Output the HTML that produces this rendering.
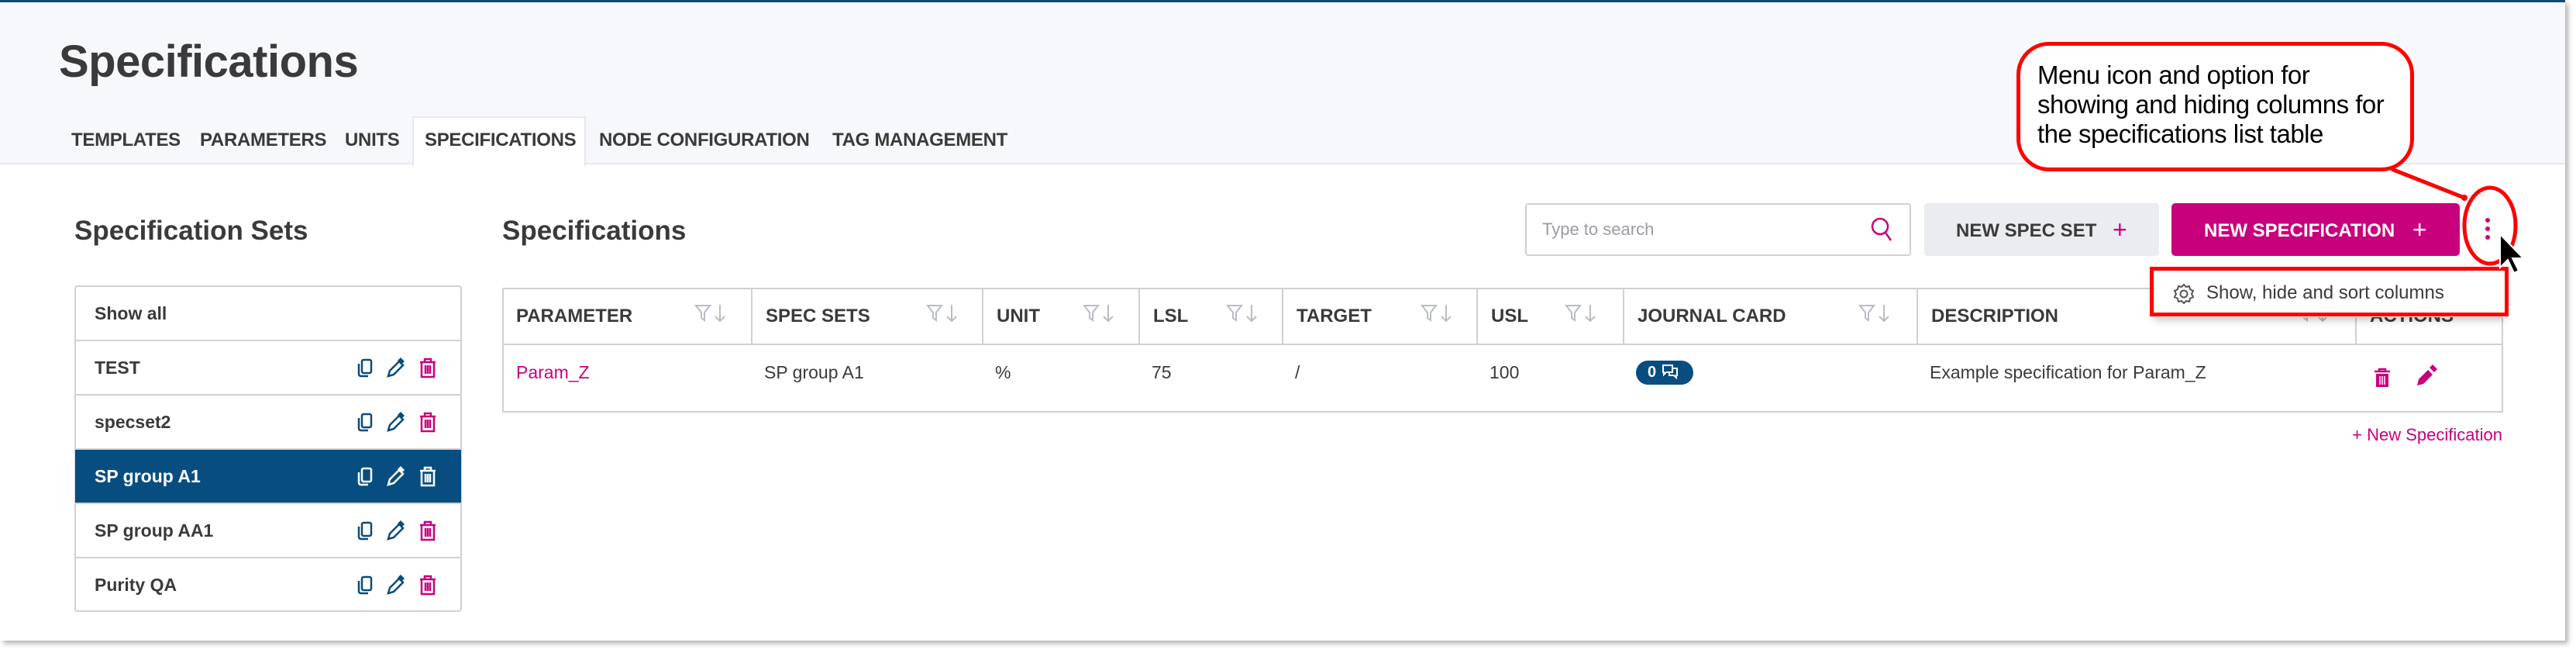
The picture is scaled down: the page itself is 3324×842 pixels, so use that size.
<!DOCTYPE html>
<html><head><meta charset="utf-8"><style>
*{box-sizing:border-box;margin:0;padding:0}
body{width:3324px;height:842px;position:relative;overflow:hidden;background:#fff;font-family:"Liberation Sans",Arial,sans-serif;color:#3a3a3a}
.a{position:absolute}
.page{left:0;top:0;width:3310px;height:826px;background:#fff;box-shadow:4px 4px 6px #b8b8b8}
.hdr{left:0;top:3px;width:3310px;height:209px;background:#f7f8fb;border-bottom:2px solid #e6e8ee}
.tab{top:167px;font-size:24px;font-weight:bold;color:#3a3a3a;letter-spacing:-0.3px}
.h2{font-size:35px;font-weight:bold;color:#3a3a3a}
.row{left:97px;width:498px;height:70px;border-bottom:2px solid #d0d0d6;font-size:23px;font-weight:bold;color:#3a3a3a;padding:0 0 0 25px;line-height:68px}
.th{top:373px;height:70px;border-left:2px solid #cfd0d6;font-size:24px;font-weight:bold;color:#3a3a3a;line-height:70px;padding-left:17px}
.td{top:445px;font-size:23px;color:#3a3a3a;line-height:70px}
</style></head><body>
<div class="a page"></div>
<div class="a" style="left:0;top:0;width:3310px;height:3px;background:#0a4b7c"></div>
<div class="a hdr"></div>
<div class="a" style="left:76px;top:46px;font-size:58px;font-weight:bold;color:#3a3a3a;letter-spacing:-0.5px">Specifications</div>
<div class="a" style="left:532px;top:150px;width:224px;height:64px;background:#fff;border:2px solid #e6e8ee;border-bottom:none"></div>
<div class="a tab" style="left:92px">TEMPLATES</div>
<div class="a tab" style="left:258px">PARAMETERS</div>
<div class="a tab" style="left:445px">UNITS</div>
<div class="a tab" style="left:548px">SPECIFICATIONS</div>
<div class="a tab" style="left:773px">NODE CONFIGURATION</div>
<div class="a tab" style="left:1074px">TAG MANAGEMENT</div>

<div class="a h2" style="left:96px;top:278px">Specification Sets</div>
<div class="a h2" style="left:648px;top:278px">Specifications</div>

<div class="a" style="left:96px;top:368px;width:500px;height:421px;border:2px solid #d0d0d6;border-radius:4px"></div>
<div class="a row" style="top:370px">Show all</div>
<div class="a row" style="top:440px">TEST</div>
<div class="a row" style="top:510px">specset2</div>
<div class="a row" style="top:580px;background:#074d80;color:#fff">SP group A1</div>
<div class="a row" style="top:650px">SP group AA1</div>
<div class="a row" style="top:720px;border-bottom:none">Purity QA</div>

<svg class="a" style="left:0;top:0" width="3324" height="842">
<defs>
<g id="cp"><rect x="5" y="-10" width="12" height="17" rx="2" fill="none" stroke="currentColor" stroke-width="2.5"/><path d="M1 -5 v13 q0 3 3 3 h9" fill="none" stroke="currentColor" stroke-width="2.5"/></g>
<g id="pn"><path d="M-8 11 l2-7 12-12 5 5 -12 12z" fill="none" stroke="currentColor" stroke-width="2.5"/><path d="M4 -9 l4-4 5 5 -4 4z" fill="currentColor"/></g>
<g id="tr"><path d="M-10 -7 h20 M-4 -7 v-4 h8 v4 M-8 -7 v19 h16 v-19 M-3 -3 v11 M0 -3 v11 M3 -3 v11" fill="none" stroke="currentColor" stroke-width="2.5"/></g>
<g id="ff"><path d="M-9 -10 h18 l-7 9 v10 l-4 -3 v-7z" fill="none" stroke="#b9bcc4" stroke-width="2"/><path d="M22 -11 v21 M16 4 l6 6 6-6" fill="none" stroke="#b9bcc4" stroke-width="2"/></g>
</defs>
<g style="color:#0a4b7c">
<use href="#cp" x="462" y="474"/><use href="#pn" x="509" y="474"/>
<use href="#cp" x="462" y="544"/><use href="#pn" x="509" y="544"/>
<use href="#cp" x="462" y="684"/><use href="#pn" x="509" y="684"/>
<use href="#cp" x="462" y="754"/><use href="#pn" x="509" y="754"/>
</g>
<g style="color:#fff"><use href="#cp" x="462" y="614"/><use href="#pn" x="509" y="614"/><use href="#tr" x="552" y="614"/></g>
<g style="color:#c8007c"><use href="#tr" x="552" y="474"/><use href="#tr" x="552" y="544"/><use href="#tr" x="552" y="684"/><use href="#tr" x="552" y="754"/></g>
</svg>

<!-- table -->
<div class="a" style="left:648px;top:371px;width:2582px;height:161px;border:2px solid #cfd0d6"></div>
<div class="a" style="left:650px;top:443px;width:2578px;height:2px;background:#cfd0d6"></div>
<div class="a th" style="left:649px;border-left:none">PARAMETER</div>
<div class="a th" style="left:969px">SPEC SETS</div>
<div class="a th" style="left:1267px">UNIT</div>
<div class="a th" style="left:1469px">LSL</div>
<div class="a th" style="left:1654px">TARGET</div>
<div class="a th" style="left:1905px">USL</div>
<div class="a th" style="left:2094px">JOURNAL CARD</div>
<div class="a th" style="left:2473px">DESCRIPTION</div>
<div class="a th" style="left:3039px">ACTIONS</div>
<svg class="a" style="left:0;top:0" width="3324" height="842">
<use href="#ff" x="907" y="404"/><use href="#ff" x="1206" y="404"/><use href="#ff" x="1408" y="404"/><use href="#ff" x="1593" y="404"/><use href="#ff" x="1844" y="404"/><use href="#ff" x="2030" y="404"/><use href="#ff" x="2409" y="404"/><use href="#ff" x="2975" y="404"/>
</svg>
<div class="a td" style="left:666px;color:#c8007c">Param_Z</div>
<div class="a td" style="left:986px">SP group A1</div>
<div class="a td" style="left:1284px">%</div>
<div class="a td" style="left:1486px">75</div>
<div class="a td" style="left:1671px">/</div>
<div class="a td" style="left:1922px">100</div>
<div class="a" style="left:2111px;top:465px;width:74px;height:31px;border-radius:16px;background:#074d80"></div>
<div class="a" style="left:2126px;top:469px;font-size:20px;color:#fff;font-weight:bold">0</div>
<svg class="a" style="left:2144px;top:469px" width="26" height="24"><path d="M2 2 h12 v9 h-8 l-3 3 v-3 h-1z M14 6 h6 v9 h-1 v3 l-3-3 h-6 v-4" fill="none" stroke="#fff" stroke-width="2"/></svg>
<div class="a td" style="left:2490px">Example specification for Param_Z</div>
<svg class="a" style="left:0;top:0" width="3324" height="842">
<g style="color:#c8007c"><g transform="translate(3074,487)"><path d="M-10 -8 h20 M-4 -8 v-3 h8 v3" stroke="currentColor" stroke-width="2.5" fill="none"/><path d="M-8 -5 h16 v17 h-16z" fill="currentColor"/><path d="M-3 -2 v11 M0 -2 v11 M3 -2 v11" stroke="#fff" stroke-width="1.5"/></g>
<g transform="translate(3129,485)"><path d="M-10 12 l2-8 12-12 6 6 -12 12z M6 -11 l4-4 6 6 -4 4z" fill="currentColor"/></g></g>
</svg>
<div class="a" style="left:3012px;top:548px;width:217px;text-align:right;font-size:22px;color:#c8007c">+ New Specification</div>

<!-- toolbar -->
<div class="a" style="left:1968px;top:262px;width:498px;height:68px;border:2px solid #cfd0d6;border-radius:4px;font-size:22px;color:#9a9ca4;line-height:64px;padding-left:20px">Type to search</div>
<svg class="a" style="left:2413px;top:278px" width="32" height="38"><circle cx="13" cy="14" r="10" fill="none" stroke="#c8007c" stroke-width="2.5"/><path d="M20 22 l7 10" stroke="#c8007c" stroke-width="2.5"/></svg>
<div class="a" style="left:2483px;top:262px;width:303px;height:68px;border-radius:4px;background:#ebecf0;font-size:24px;font-weight:bold;color:#3a3a3a;line-height:68px;padding-left:41px">NEW SPEC SET <span style="color:#c8007c;font-size:32px;font-weight:normal;margin-left:14px;vertical-align:-2px">+</span></div>
<div class="a" style="left:2802px;top:262px;width:372px;height:68px;border-radius:5px;background:#c8007c;font-size:24px;font-weight:bold;color:#fff;line-height:68px;padding-left:42px">NEW SPECIFICATION <span style="font-size:32px;font-weight:normal;margin-left:16px;vertical-align:-2px">+</span></div>
<svg class="a" style="left:3203px;top:280px" width="14" height="36"><circle cx="7" cy="4" r="3" fill="#c8007c"/><circle cx="7" cy="15" r="3" fill="#c8007c"/><circle cx="7" cy="26" r="3" fill="#c8007c"/></svg>

<!-- dropdown -->
<div class="a" style="left:2780px;top:349px;width:452px;height:60px;background:#fff;box-shadow:0 3px 10px rgba(0,0,0,.25)"></div>
<div class="a" style="left:2774px;top:344px;width:463px;height:64px;border:5px solid #f00"></div>
<svg class="a" style="left:2804px;top:365px" width="28" height="28"><circle cx="14" cy="14" r="4.5" fill="none" stroke="#555" stroke-width="2"/><path d="M14 2 l3 3 4-1 1 4 4 2-2 4 2 4-4 2-1 4-4-1-3 3-3-3-4 1-1-4-4-2 2-4-2-4 4-2 1-4 4 1z" fill="none" stroke="#555" stroke-width="2"/></svg>
<div class="a" style="left:2847px;top:364px;font-size:24px;color:#3a3a3a">Show, hide and sort columns</div>

<!-- callout -->
<div class="a" style="left:2602px;top:54px;width:513px;height:167px;border:5px solid #f00;border-radius:42px;background:#fff"></div>
<div class="a" style="left:2629px;top:78px;font-size:33px;line-height:38px;color:#000;letter-spacing:-0.5px">Menu icon and option for<br>showing and hiding columns for<br>the specifications list table</div>
<svg class="a" style="left:0;top:0" width="3324" height="842">
<path d="M3086 218 L3180 255" stroke="#f00" stroke-width="5"/><circle cx="3180" cy="255" r="4" fill="#f00"/>
<ellipse cx="3213" cy="291" rx="33" ry="49" fill="none" stroke="#f00" stroke-width="5"/>
<path d="M3226 302 v43 l10-10 8 17 6-3 -8-16 h14z" fill="#000" stroke="#fff" stroke-width="2"/>
</svg>
</body></html>
